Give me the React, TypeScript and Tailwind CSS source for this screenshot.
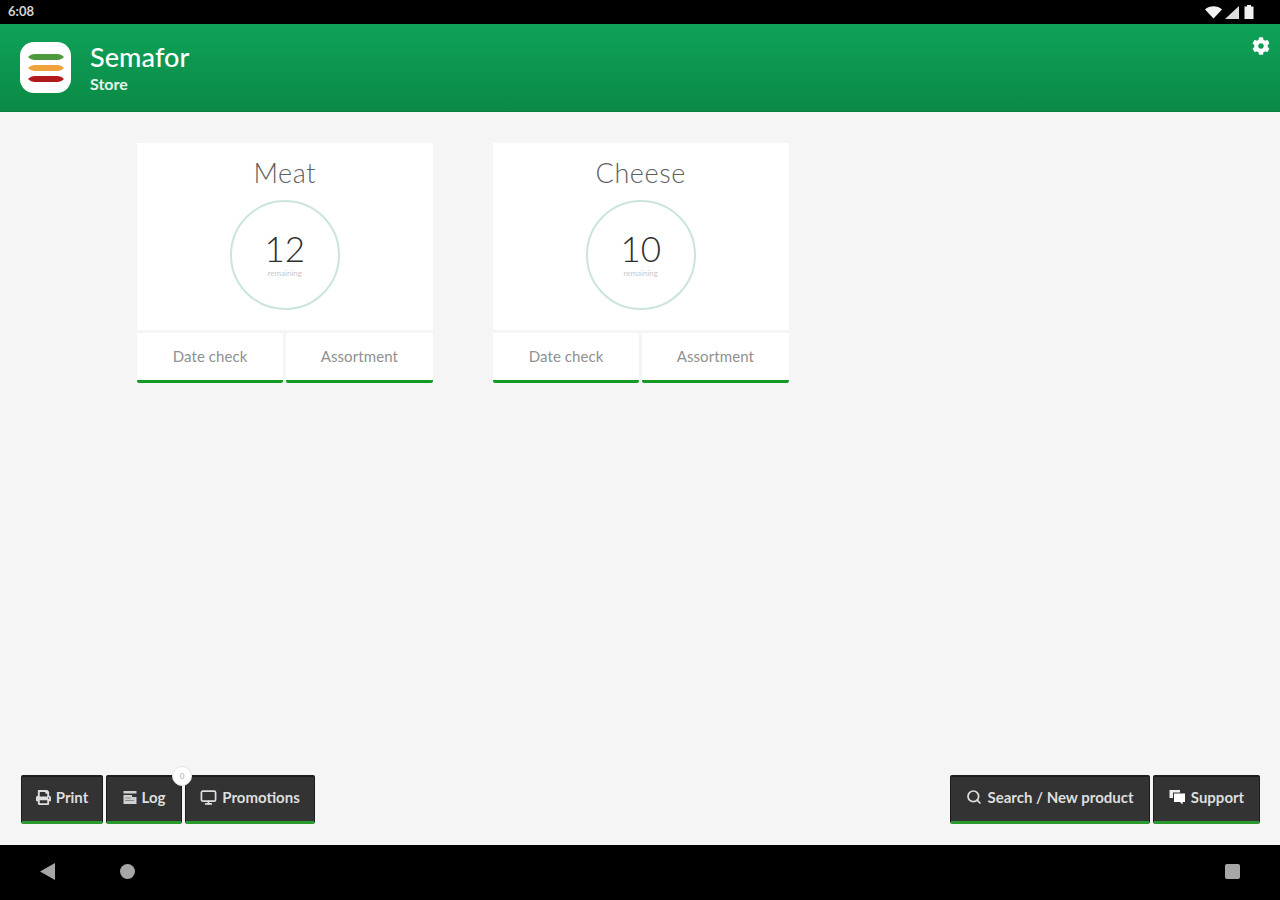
import { Search, Monitor } from 'lucide-react';
import { FaCog, FaPrint } from 'react-icons/fa';

const departments = [
  { name: 'Meat', count: 12 },
  { name: 'Cheese', count: 10 },
];

const StatusIcons = () => (
  <div className="flex items-center gap-[2px]">
    <svg width="17" height="13" viewBox="0 0 17 13">
      <path d="M0 3.5C4.5 -0.8 12.5 -0.8 17 3.5L8.5 12.5Z" fill="#f2f2f2" />
    </svg>
    <svg width="14" height="13" viewBox="0 0 14 13" className="ml-[1px]">
      <path d="M14 0V13H0Z" fill="#dcdcdc" />
    </svg>
    <svg width="10" height="14" viewBox="0 0 10 14" className="ml-[3px]">
      <path d="M3 0H7V1.5H9.5V14H0.5V1.5H3Z" fill="#f2f2f2" />
    </svg>
  </div>
);

const LogoBar = ({ color }: { color: string }) => (
  <svg width="36" height="6" viewBox="0 0 36 6">
    <path d="M0 3C2 1 4 0 7 0H29C32 0 34 1 36 3C34 5 32 6 29 6H7C4 6 2 5 0 3Z" fill={color} />
  </svg>
);

const AppLogo = () => (
  <div className="w-[51px] h-[51px] rounded-[14px] bg-white flex flex-col items-center justify-center gap-[5px]">
    <LogoBar color="#4c9a3c" />
    <LogoBar color="#f0a33a" />
    <LogoBar color="#b11a1a" />
  </div>
);

const DepartmentCard = ({ name, count }: { name: string; count: number }) => (
  <div className="w-[295.5px]">
    <div className="h-[187px] bg-white flex flex-col items-center pt-[12px]">
      <div className="text-[27px] leading-[36px] font-light tracking-[0.6px] text-[#5e5e5e]">{name}</div>
      <div className="mt-[9px] w-[110px] h-[110px] rounded-full border-2 border-[#cbe5db] flex flex-col items-center pt-[26px]">
        <div className="text-[35px] leading-[40px] font-light text-[#2e2e2e]">{count}</div>
        <div className="mt-[1px] text-[8px] leading-[8px] text-[#c8c8c8]">remaining</div>
      </div>
    </div>
    <div className="mt-[3px] flex gap-[3px]">
      {['Date check', 'Assortment'].map((label) => (
        <div
          key={label}
          className="flex-1 h-[50px] bg-white border-b-[3px] border-[#149a24] rounded-b-[2px] flex items-center justify-center text-[15px] tracking-[0.1px] text-[#909090]"
        >
          {label}
        </div>
      ))}
    </div>
  </div>
);

const ToolButton = ({ icon, label, width }: { icon: React.ReactNode; label: string; width: string }) => (
  <div
    className={`${width} h-[49px] bg-[#333333] border-t-2 border-x border-[#1c1c1c] border-b-[3px] border-b-[#2a9a2e] rounded-[2px] flex items-center justify-center gap-[5px] pb-[4px] text-[15px] font-bold text-[#dedede]`}
  >
    {icon}
    {label}
  </div>
);

const LogIcon = () => (
  <svg width="14" height="15" viewBox="0 0 14 15">
    <path d="M0.5 1H13.5V3.5H0.5ZM0.5 5H9V7H13.5V14H0.5Z" fill="#d0d0d0" />
    <path d="M2 7.5H8V8.5H2ZM2 10H11V11H2Z" fill="#8a8a8a" />
  </svg>
);

const SupportIcon = () => (
  <svg width="17" height="16" viewBox="0 0 17 16">
    <path d="M0.5 1H11V3.5H4V9H0.5Z" fill="#f0f0f0" />
    <path d="M5 4.5H16V13H13.5V15.5L11 13H5Z" fill="#ffffff" />
  </svg>
);

export default function App() {
  return (
    <div className="w-[1280px] h-[900px] overflow-hidden flex flex-col bg-[#f5f5f5] font-['Lato',sans-serif]">
      {/* Status bar */}
      <div className="h-6 shrink-0 bg-black flex items-center justify-between pl-2 pr-[26px]">
        <span className="text-[13px] font-bold text-[#d4d4d4]">6:08</span>
        <StatusIcons />
      </div>

      {/* Header */}
      <div className="h-[88px] shrink-0 bg-gradient-to-b from-[#0fa259] to-[#0a8a45] border-b border-[#0a7d3f] flex items-start justify-between pl-5 pr-[10px]">
        <div className="flex items-center gap-[19px] pt-[17px]">
          <AppLogo />
          <div className="text-white -mt-[1px]">
            <div className="text-[27px] leading-[34px] font-medium tracking-[0.1px]">Semafor</div>
            <div className="text-[16px] leading-[20px] font-bold text-[#e6f4ea]">Store</div>
          </div>
        </div>
        <FaCog size={18} className="mt-[13px] text-white" />
      </div>

      {/* Departments */}
      <div className="flex-1 pt-[31px] pl-[137px] flex gap-[60.5px] items-start">
        {departments.map((d) => (
          <DepartmentCard key={d.name} {...d} />
        ))}
      </div>

      {/* Bottom actions */}
      <div className="shrink-0 pl-[21px] pr-5 pb-[21px] flex justify-between">
        <div className="flex gap-[3px]">
          <ToolButton width="w-[82px]" label="Print" icon={<FaPrint size={15} />} />
          <div className="relative">
            <ToolButton width="w-[76px]" label="Log" icon={<LogIcon />} />
            <div className="absolute -top-[9px] -right-[10px] w-5 h-5 rounded-full bg-white border border-[#e4e4e4] flex items-center justify-center text-[8px] text-[#aaaaaa]">
              0
            </div>
          </div>
          <ToolButton width="w-[130px]" label="Promotions" icon={<Monitor size={17} strokeWidth={2.4} />} />
        </div>
        <div className="flex gap-[3px]">
          <ToolButton width="w-[200px]" label="Search / New product" icon={<Search size={16} strokeWidth={2.6} />} />
          <ToolButton width="w-[107px]" label="Support" icon={<SupportIcon />} />
        </div>
      </div>

      {/* Navigation bar */}
      <div className="h-[55px] shrink-0 bg-black flex items-center justify-between pl-10 pr-10 pb-[2px]">
        <div className="flex items-center gap-[65px]">
          <svg width="15" height="17" viewBox="0 0 15 17">
            <path d="M15 0V17L0 8.5Z" fill="#a6a6a6" />
          </svg>
          <div className="w-[15px] h-[15px] rounded-full bg-[#a6a6a6]" />
        </div>
        <div className="w-[15px] h-[15px] rounded-[2px] bg-[#a6a6a6]" />
      </div>
    </div>
  );
}
